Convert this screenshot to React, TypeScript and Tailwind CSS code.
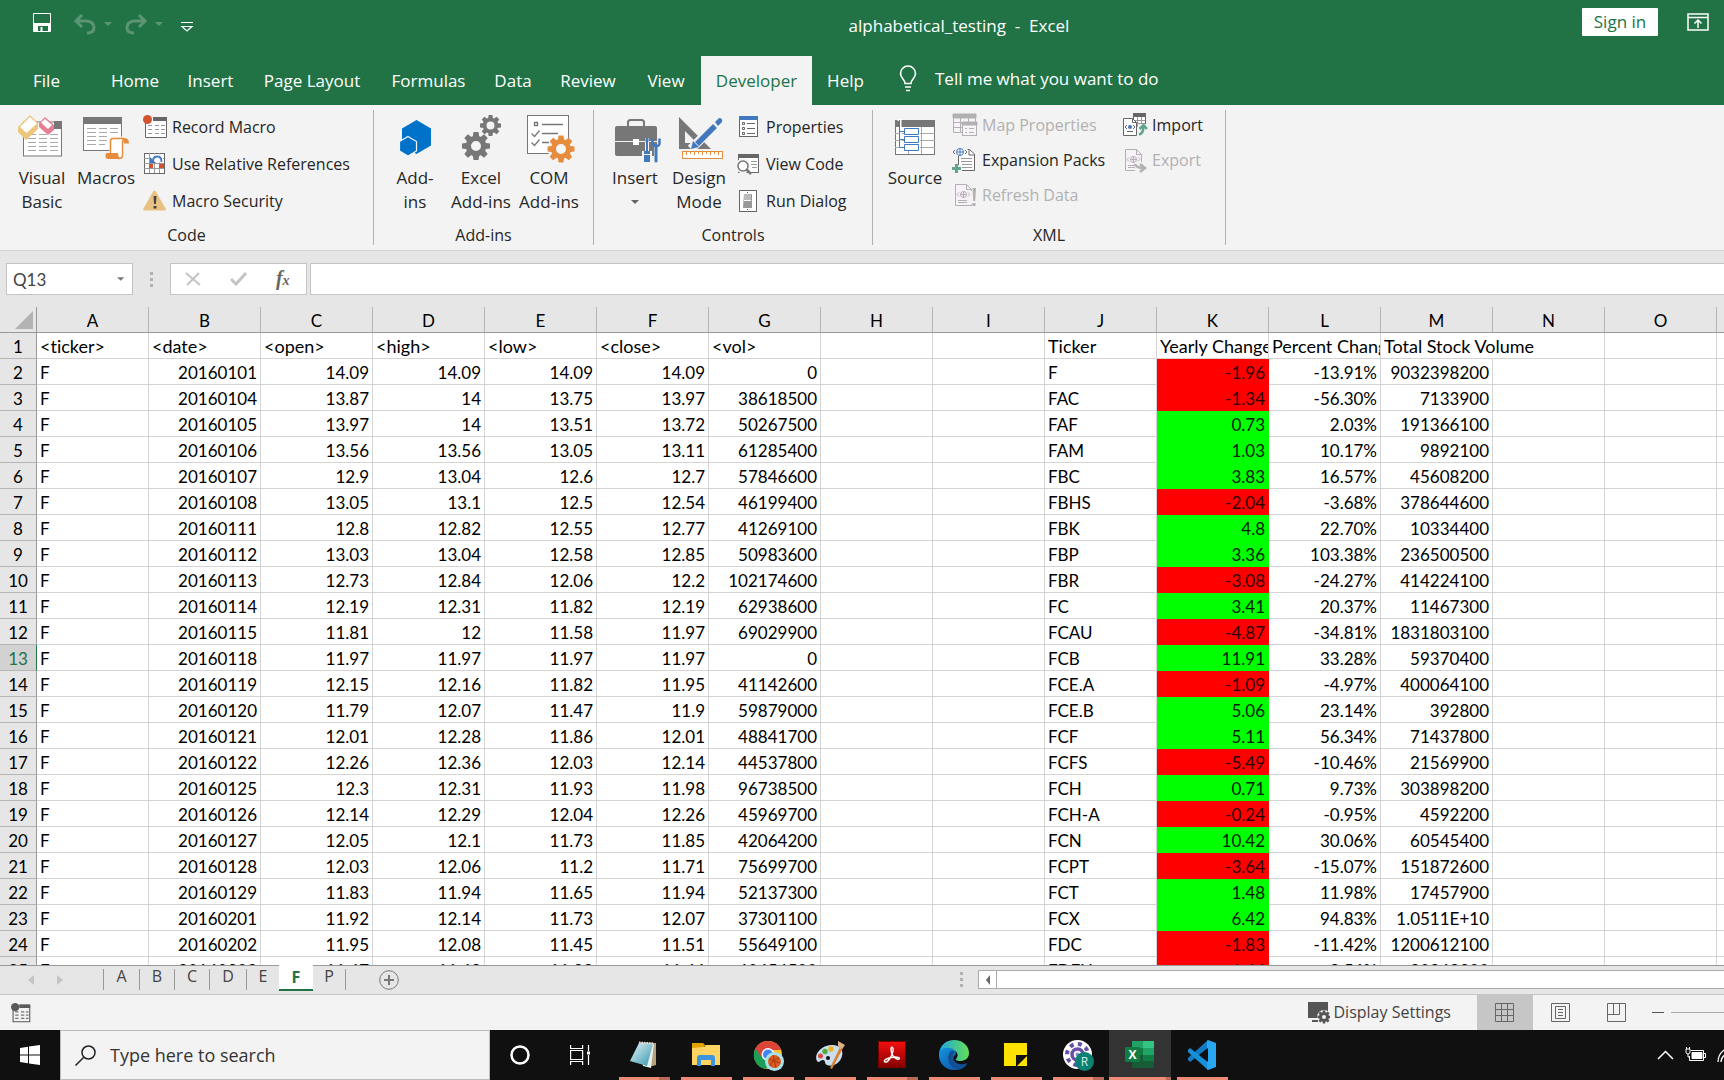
import React from "react";

function Gear({ cx, cy, r, hole, fill }: { cx: number; cy: number; r: number; hole: number; fill: string }) {
  const ring = r * 0.74;
  return (
    <g transform={`translate(${cx} ${cy})`} fill={fill}>
      {[0, 45, 90, 135, 180, 225, 270, 315].map((a) => (
        <path key={a} transform={`rotate(${a})`} d={`M${-r * 0.24} ${-ring * 0.8}L${-r * 0.18} ${-r}H${r * 0.18}L${r * 0.24} ${-ring * 0.8}Z`} />
      ))}
      <circle r={(ring + hole) / 2} fill="none" stroke={fill} strokeWidth={ring - hole} />
    </g>
  );
}

function Big({ children }: { children: React.ReactNode }) {
  return (
    <svg width="48" height="48" viewBox="0 0 48 48" className="shrink-0 overflow-visible" aria-hidden="true">
      {children}
    </svg>
  );
}

function Small({ children }: { children: React.ReactNode }) {
  return (
    <svg width="24" height="24" viewBox="0 0 24 24" className="shrink-0 overflow-visible" aria-hidden="true">
      {children}
    </svg>
  );
}

const VisualBasicIcon = () => (
  <Big>
    <rect x="5.5" y="9" width="38" height="34" fill="#fff" stroke="#777" />
    <path d="M36 8h8v8h-8z" fill="#777" />
    <path d="M10 21.500h8m3 0h8m3 0h8M10 25.500h8m3 0h8m3 0h8M10 29.500h8m3 0h8m3 0h8M10 33.500h8m3 0h8m3 0h8M10 37.500h8m3 0h8m3 0h8" stroke="#a9a9a9" />
    <path d="M0 14L12 2l8 8v6L8 27 0 19z" fill="#ecc77b" />
    <path d="M2 14L12 4l7 6.500L8.500 20z" fill="#fff" />
    <path d="M21 10l6-6 9 8v5l-6 5-9-8z" fill="#e57f96" />
    <path d="M23 9.500L27 6l7 6-4 4z" fill="#fff" />
  </Big>
);

const MacrosIcon = () => (
  <Big>
    <rect x="1.500" y="4.500" width="38" height="33" fill="#fff" stroke="#777" />
    <path d="M1 4h39v7H1z" fill="#777" />
    <path d="M5 15.500h9m3 0h8m3 0h8M5 19.500h9m3 0h8m3 0h8M5 23.500h9m3 0h8M5 27.500h9m3 0h8M5 31.500h9m3 0h6" stroke="#a9a9a9" />
    <path d="M29 40V28q0-3 3-3h11q4 0 4 5h-4v12q0 4-4 4H27z" fill="#fff" stroke="#f3f3f3" strokeWidth="3" />
    <path d="M28.500 41V28q0-2.500 3-2.500h11q-2 1-2 4V42q0 3.500-3.500 3.500-2 0-2-3.500z" fill="#fff" stroke="#e78c3c" strokeWidth="1.500" />
    <path d="M41 25.500q6-1 6 5h-5zM25 40h11q0 4 3 6H26q-2.500 0-2.500-3T25 40z" fill="#e78c3c" />
  </Big>
);

const AddinsIcon = () => (
  <Big>
    <path d="M25.500 7L40 15.500v17L25.500 41 11 32.500v-17z" fill="#0072c9" />
    <path d="M17 23.500l8.500 5v9.500L17 43l-8.500-5v-9.500z" fill="#0072c9" stroke="#f3f3f3" strokeWidth="1.200" />
  </Big>
);

const ExcelAddinsIcon = () => (
  <Big>
    <Gear cx={33.500} cy={12.500} r={10.500} hole={4} fill="#777" />
    <Gear cx={19} cy={33} r={14} hole={5} fill="#777" />
  </Big>
);

const ComIcon = () => (
  <Big>
    <rect x="2.500" y="2.500" width="41" height="38" fill="#fff" stroke="#777" />
    <path d="M9.500 9.500h3v3h-3zM17 11.500h21M17 20.500h16M17 29.500h7M6.500 20.500l3 3 5-6M6.500 29.500l3 3 5-6" fill="none" stroke="#777" strokeWidth="1.300" />
    <circle cx="36" cy="36" r="13" fill="#f6f6f6" />
    <Gear cx={36} cy={36} r={13.500} hole={5} fill="#e78c3c" />
  </Big>
);

const ToolboxIcon = () => (
  <Big>
    <path d="M17 13V9.500Q17 7 19.500 7h11Q33 7 33 9.500V13" fill="none" stroke="#777" strokeWidth="2" />
    <rect x="4" y="13" width="42" height="30" rx="2" fill="#777" />
    <path d="M4 28.500h42" stroke="#f3f3f3" />
    <rect x="22" y="26" width="6" height="6" fill="#fff" />
    <path d="M36 25v13M33 40h6v9h-6zM45 34v15" fill="none" stroke="#f3f3f3" strokeWidth="4" />
    <path d="M36 25v14" stroke="#4178be" strokeWidth="2" />
    <path d="M34.500 25h3v4h-3zM33 38h6v3h-6zM33 42h6v7h-6z" fill="#4178be" />
    <path d="M41.500 25.500v4q0 3 3.500 3.500t3.500-3.500v-4" fill="none" stroke="#4178be" strokeWidth="2.500" />
    <path d="M45 33v15" stroke="#4178be" strokeWidth="3" strokeLinecap="round" />
  </Big>
);

const DesignIcon = () => (
  <Big>
    <path d="M4 4l32 32H4zM10 18v12h12z" fill="#777" fillRule="evenodd" />
    <path d="M16 36L45 7" stroke="#f3f3f3" strokeWidth="9" />
    <path d="M22 31L40 13" stroke="#4178be" strokeWidth="5.500" />
    <path d="M16 36l2-8 6 6zM40 9l4-4q4 0 3 4l-4 4z" fill="#4178be" />
    <rect x="7.500" y="38.500" width="40" height="7" fill="#fff" stroke="#e78c3c" />
    <path d="M11.500 38v4m4-4v3m4-3v4m4-4v3m4-3v4m4-4v3m4-3v4m4-4v3m4-3v4" stroke="#e78c3c" />
  </Big>
);

const SourceIcon = () => (
  <Big>
    <rect x="4.500" y="7.500" width="39" height="34" fill="#fff" stroke="#777" />
    <path d="M4 7h40v7H4z" fill="#777" />
    <path d="M4 20.500h40M4 27.500h40M4 34.500h40M30.500 14v27M17.500 38v3" stroke="#a9a9a9" />
    <path d="M13 16h16v21H13z" fill="#fff" />
    <path d="M6.500 7h3v28" stroke="#fff" strokeWidth="2" fill="none" />
    <path d="M8.500 7v27.500H13M8.500 18.500H13M8.500 26.500H13M13.500 15.500h14v6h-14zM13.500 23.500h14v6h-14zM13.500 31.500h14v6h-14z" fill="none" stroke="#4178be" />
  </Big>
);

const RecordIcon = () => (
  <Small>
    <path d="M2.500 8v14.500h21V2.500H10" fill="#fff" stroke="#666" />
    <path d="M10 2h14v4H10z" fill="#666" />
    <path d="M5 10.500h4m3 0h4m2 0h4M5 14.500h4m3 0h4m2 0h4M5 18.500h4m3 0h4m2 0h4" stroke="#999" />
    <circle cx="4.500" cy="4.500" r="4.500" fill="#d35230" />
  </Small>
);

const RelativeIcon = () => (
  <Small>
    <rect x="1.500" y="1.500" width="20" height="20" fill="#fff" stroke="#666" />
    <path d="M6.500 1v20M11.500 1v20M16.500 1v20M1 6.500h20M1 11.500h20M1 16.500h20" stroke="#999" />
    <path d="M6 12h4v4H6zM16 12h5v4h-5z" fill="#d35230" />
    <path d="M7 2.500h13v8H7z" fill="#fff" />
    <path d="M10 9q0-4.500 4.500-4.500 4 0 4 5.500" fill="none" stroke="#4178be" strokeWidth="1.800" />
    <path d="M7 5v6h6z" fill="#4178be" />
  </Small>
);

const WarningIcon = () => (
  <Small>
    <path d="M11.500 1.500q1 0 2 2l9 16q1 2-1 2h-20q-2 0-1-2l9-16q1-2 2-2z" fill="#e9c282" />
    <path d="M10.500 7h3l-.6 8h-1.800zM10.500 17h3v2.500h-3z" fill="#444" />
  </Small>
);

const PropertiesIcon = () => (
  <Small>
    <rect x="2.500" y="1.500" width="18" height="20" fill="#fff" stroke="#666" />
    <path d="M2 1h19v4H2z" fill="#4178be" />
    <path d="M10 8.500h8M10 13.500h8M10 18.500h8" stroke="#666" />
    <path d="M5.500 7.500h2v2h-2zM5.500 12.500h2v2h-2zM5.500 17.500h2v2h-2z" fill="none" stroke="#666" />
  </Small>
);

const ViewCodeIcon = () => (
  <Small>
    <rect x="1.500" y="2.500" width="20" height="18" fill="#fff" stroke="#666" />
    <path d="M1 2h21v4H1z" fill="#666" />
    <path d="M14 9.500h6M14 12.500h6M15 15.500h5" stroke="#999" />
    <circle cx="6" cy="14" r="5.500" fill="#fff" stroke="#f3f3f3" strokeWidth="4" />
    <circle cx="6" cy="14" r="5" fill="#fff" stroke="#777" strokeWidth="1.500" />
    <path d="M9.500 17.500L14 22" stroke="#777" strokeWidth="2.500" />
  </Small>
);

const RunDialogIcon = () => (
  <Small>
    <rect x="2.500" y="1.500" width="17" height="21" fill="#fff" stroke="#666" />
    <path d="M7 5h8v14H6z" fill="#999" />
    <path d="M7 5h7v6H7z" fill="#bbb" />
    <path d="M7 11.500h7" stroke="#fff" />
    <path d="M10.500 3v1m0 16v1" stroke="#555" />
  </Small>
);

const MapIcon = () => (
  <Small>
    <path d="M.5 1.500h22v18H.5z" fill="#f7f3f8" stroke="#b1b1b1" />
    <path d="M0 1h23v4H0zM0 9.500h22M0 14.500h22M7.500 5v14M15.500 5v5" stroke="#b1b1b1" fill="#b1b1b1" />
    <rect x="9.500" y="9.500" width="14" height="13" fill="#f7f3f8" stroke="#b1b1b1" />
    <path d="M9 9h15v3H9zM12 15.500h2m2 0h5M12 19.500h2m2 0h5" stroke="#b1b1b1" fill="#b1b1b1" />
  </Small>
);

const ExpansionIcon = () => (
  <Small>
    <path d="M5.500 8v14.500h16V6l-5-4.500h-2" fill="#fff" stroke="#666" />
    <path d="M16 1.500V7h5.500" fill="none" stroke="#666" />
    <path d="M8 10.500h11M8 13.500h11M9 16.500h10M9 19.500h10" stroke="#999" />
    <circle cx="7" cy="4" r="3.500" fill="#fff" stroke="#4178be" />
    <path d="M7 .5v7M3.500 4h7" stroke="#4178be" />
    <path d="M2 2L0 4l2 2M12 2l2 2-2 2" fill="none" stroke="#666" />
    <path d="M0 17h9v7H0z" fill="#f3f3f3" />
    <path d="M3.500 16v9M-1 20.500h9" stroke="#5fa68a" strokeWidth="3" />
  </Small>
);

const DisabledDoc = ({ children }: { children: React.ReactNode }) => (
  <Small>
    <path d="M2.500 1.500h11l5 5v16h-16z" fill="#f9f1f9" stroke="#b1b1b1" />
    <path d="M13.500 1.500v5h5M5 17.500h9M5 19.500h9" fill="none" stroke="#b1b1b1" />
    <circle cx="10.500" cy="11.500" r="3" fill="none" stroke="#b1b1b1" />
    <path d="M10.500 8v7M7 11.500h7M6 9.500l-2 2 2 2M15 9.500l2 2-2 2" fill="none" stroke="#b1b1b1" />
    {children}
  </Small>
);

const RefreshIcon = () => (
  <DisabledDoc>
    <path d="M17.500 8h1.500v13h-1.500z" fill="#f3f3f3" />
    <path d="M19.500 5h3.500l-.8 13h-1.900zM19.500 20h3v3h-3z" fill="#b1b1b1" />
  </DisabledDoc>
);

const ExportIcon = () => (
  <DisabledDoc>
    <path d="M12 14h12v9H12z" fill="#f3f3f3" />
    <path d="M12 16q1 4 9 4M17 16l5 4-5 4" fill="none" stroke="#b1b1b1" strokeWidth="2.500" />
  </DisabledDoc>
);

const ImportIcon = () => (
  <Small>
    <rect x="10.500" y="1" width="12" height="12" fill="#fff" stroke="#666" />
    <path d="M10 0h13v4H10z" fill="#666" />
    <path d="M10 7.500h12M14.500 4v9M18.500 4v9M10 10.500h12" stroke="#999" />
    <path d="M.5 5.500h9l4 4v13H.5z" fill="#fff" stroke="#666" />
    <path d="M9.500 5.500v4h4M4 18.500h6" fill="none" stroke="#666" />
    <circle cx="7" cy="14" r="2" fill="#4178be" />
    <path d="M4 12l-2 2 2 2M10 12l2 2-2 2" fill="none" stroke="#666" />
    <path d="M15 11h9v12h-9z" fill="#f3f3f3" />
    <path d="M16 21.500q4.500-1 4.500-8M16.500 16l4-4 3.500 4" fill="none" stroke="#5fa68a" strokeWidth="2.500" />
  </Small>
);

function BigButton({ icon, lines, width, arrow }: { icon: React.ReactNode; lines: string[]; width: string; arrow?: boolean }) {
  return (
    <button className={`${width} flex shrink-0 flex-col items-center self-start whitespace-nowrap text-[17px] leading-6`}>
      {icon}
      <span className="mt-[5px] block">{lines[0]}</span>
      {lines[1] && <span className="block">{lines[1]}</span>}
      {arrow && (
        <svg width="8" height="4" viewBox="0 0 8 4" className="mt-2.5" aria-hidden="true">
          <path d="M0 0h8L4 4z" fill="#666" />
        </svg>
      )}
    </button>
  );
}

function SmallButton({ icon, label, disabled }: { icon: React.ReactNode; label: string; disabled?: boolean }) {
  return (
    <button disabled={disabled} className="flex items-center gap-[5px] whitespace-nowrap leading-6 disabled:text-[#b1b1b1]">
      {icon}
      {label}
    </button>
  );
}

function Group({ label, width, children }: { label: string; width: string; children: React.ReactNode }) {
  return (
    <section aria-label={label} className={`${width} flex shrink-0 flex-col border-r border-[#b1b1b1]`}>
      <div className="flex h-[115px] pl-2 pt-[3px]">{children}</div>
      <h2 className="text-center leading-5">{label}</h2>
    </section>
  );
}

const tabs: [string, string][] = [
  ["File", "w-[97px] pr-1"],
  ["Home", "w-[76px]"],
  ["Insert", "w-[75px]"],
  ["Page Layout", "w-[128px]"],
  ["Formulas", "w-[105px]"],
  ["Data", "w-[64px]"],
  ["Review", "w-[86px]"],
  ["View", "w-[70px]"],
  ["Developer", "w-[111px]"],
  ["Help", "w-[67px]"],
];

const prices = `20160101 14.09 14.09 14.09 14.09 0
20160104 13.87 14 13.75 13.97 38618500
20160105 13.97 14 13.51 13.72 50267500
20160106 13.56 13.56 13.05 13.11 61285400
20160107 12.9 13.04 12.6 12.7 57846600
20160108 13.05 13.1 12.5 12.54 46199400
20160111 12.8 12.82 12.55 12.77 41269100
20160112 13.03 13.04 12.58 12.85 50983600
20160113 12.73 12.84 12.06 12.2 102174600
20160114 12.19 12.31 11.82 12.19 62938600
20160115 11.81 12 11.58 11.97 69029900
20160118 11.97 11.97 11.97 11.97 0
20160119 12.15 12.16 11.82 11.95 41142600
20160120 11.79 12.07 11.47 11.9 59879000
20160121 12.01 12.28 11.86 12.01 48841700
20160122 12.26 12.36 12.03 12.14 44537800
20160125 12.3 12.31 11.93 11.98 96738500
20160126 12.14 12.29 12.04 12.26 45969700
20160127 12.05 12.1 11.73 11.85 42064200
20160128 12.03 12.06 11.2 11.71 75699700
20160129 11.83 11.94 11.65 11.94 52137300
20160201 11.92 12.14 11.73 12.07 37301100
20160202 11.95 12.08 11.45 11.51 55649100
20160203 11.67 11.68 11.22 11.46 60454500`.split("\n").map((l) => l.split(" "));

const summary = `F -1.96 -13.91% 9032398200
FAC -1.34 -56.30% 7133900
FAF 0.73 2.03% 191366100
FAM 1.03 10.17% 9892100
FBC 3.83 16.57% 45608200
FBHS -2.04 -3.68% 378644600
FBK 4.8 22.70% 10334400
FBP 3.36 103.38% 236500500
FBR -3.08 -24.27% 414224100
FC 3.41 20.37% 11467300
FCAU -4.87 -34.81% 1831803100
FCB 11.91 33.28% 59370400
FCE.A -1.09 -4.97% 400064100
FCE.B 5.06 23.14% 392800
FCF 5.11 56.34% 71437800
FCFS -5.49 -10.46% 21569900
FCH 0.71 9.73% 303898200
FCH-A -0.24 -0.95% 4592200
FCN 10.42 30.06% 60545400
FCPT -3.64 -15.07% 151872600
FCT 1.48 11.98% 17457900
FCX 6.42 94.83% 1.0511E+10
FDC -1.83 -11.42% 1200612100
FDEU -1.66 -9.56% 20362300`.split("\n").map((l) => l.split(" "));

const columns = "ABCDEFGHIJKLMNO".split("");
const headings = ["<ticker>", "<date>", "<open>", "<high>", "<low>", "<close>", "<vol>", "", "", "Ticker", "Yearly Change", "Percent Change", "Total Stock Volume", "", ""];

const cell = "h-[26px] whitespace-nowrap border-b border-[#d4d4d4] p-0 px-[3px] pt-0.5 leading-[23px]";

function RowHead({ n }: { n: number }) {
  const active = n === 13;
  return (
    <th
      scope="row"
      className={`h-[26px] border-b border-r border-b-[#b5b5b5] p-0 pt-0.5 text-center font-normal leading-[23px] ${active ? "border-r-[#217346] bg-[#d2d2d2] text-[#217346]" : "border-r-[#999] bg-[#e6e6e6]"}`}
    >
      {n}
    </th>
  );
}

function Sheet() {
  return (
    <table className="w-full table-fixed border-separate border-spacing-0 bg-white font-['Lato','Liberation_Sans',sans-serif] text-[17px] text-black [font-variant-ligatures:none]">
      <colgroup>
        <col className="w-[37px]" />
        {columns.map((c) => (
          <col key={c} className="w-[112px]" />
        ))}
        <col />
      </colgroup>
      <thead>
        <tr className="bg-[#e6e6e6]">
          <th className="h-[26px] border-b border-r border-[#999] p-0">
            <svg width="18" height="18" viewBox="0 0 18 18" className="ml-auto mr-[3px]" aria-label="Select all">
              <path d="M18 0v18H0z" fill="#b3b3b3" />
            </svg>
          </th>
          {columns.map((c) => (
            <th key={c} scope="col" className="h-[26px] border-b border-r border-b-[#999] border-r-[#b5b5b5] p-0 pt-0.5 font-normal leading-[23px]">
              {c}
            </th>
          ))}
          <th className="border-b border-[#999] p-0" />
        </tr>
      </thead>
      <tbody>
        <tr>
          <RowHead n={1} />
          {headings.map((h, i) => (
            <td key={i} className={`${cell} text-lg ${i === 12 ? "overflow-visible" : "overflow-hidden border-r"}`}>
              {h}
            </td>
          ))}
          <td className={cell} />
        </tr>
        {prices.map((p, i) => {
          const s = summary[i];
          return (
            <tr key={p[0]}>
              <RowHead n={i + 2} />
              <td className={`${cell} border-r`}>F</td>
              {p.map((v, j) => (
                <td key={j} className={`${cell} border-r text-right`}>
                  {v}
                </td>
              ))}
              <td className={`${cell} border-r`} />
              <td className={`${cell} border-r`} />
              <td className={`${cell} border-r`}>{s[0]}</td>
              <td className={`h-[26px] p-0 pb-px pr-1 pt-0.5 text-right leading-[23px] ${s[1].startsWith("-") ? "bg-[#ff0000] text-[#2a0000]" : "bg-[#00ff00] text-[#002000]"}`}>{s[1]}</td>
              <td className={`${cell} border-r text-right`}>{s[2]}</td>
              <td className={`${cell} border-r text-right`}>{s[3]}</td>
              <td className={`${cell} border-r`} />
              <td className={`${cell} border-r`} />
              <td className={cell} />
            </tr>
          );
        })}
      </tbody>
    </table>
  );
}

function Dots() {
  return (
    <span className="flex flex-col gap-[3px]" aria-hidden="true">
      <i className="size-[3px] bg-[#b1b1b1]" />
      <i className="size-[3px] bg-[#b1b1b1]" />
      <i className="size-[3px] bg-[#b1b1b1]" />
    </span>
  );
}

function AppIcon({ children }: { children: React.ReactNode }) {
  return (
    <svg width="32" height="32" viewBox="0 0 32 32" aria-hidden="true">
      {children}
    </svg>
  );
}

const apps: { name: string; stack?: boolean; active?: boolean; icon: React.ReactNode }[] = [
  {
    name: "Notepad",
    stack: true,
    icon: (
      <AppIcon>
        <defs>
          <linearGradient id="pad" x1="0" y1="0" x2="1" y2="1">
            <stop offset="0" stopColor="#e4f6fa" />
            <stop offset="1" stopColor="#3594ab" />
          </linearGradient>
        </defs>
        <path d="M12 3l16 1v22l-7 2z" fill="#b3a17e" />
        <path d="M11 4l15 1-3 24-8-2z" fill="#e6eeee" />
        <path d="M11 4l14 1-6 22-17-5z" fill="url(#pad)" />
        <path d="M11 3.500l15 1" stroke="#ddd" strokeWidth="2" strokeDasharray="1.500 1" />
      </AppIcon>
    ),
  },
  {
    name: "File Explorer",
    icon: (
      <AppIcon>
        <path d="M2 4h11l3 3h-2v4H2z" fill="#e2a200" />
        <path d="M2 9l12-1 2-2h14v20H2z" fill="#ffd462" />
        <path d="M7 27V19q0-3 3-3h12q3 0 3 3v8h-4v-6h-10v6z" fill="#3b94dc" />
      </AppIcon>
    ),
  },
  {
    name: "Google Chrome",
    icon: (
      <AppIcon>
        <circle cx="16" cy="16" r="14" fill="#fbc52f" />
        <path d="M16 16L4 8.500A14 14 0 0 0 14 30l6-10z" fill="#1b9e57" />
        <path d="M3.500 9.500A14 14 0 0 1 29 11H16l-6 8z" fill="#db4437" />
        <circle cx="16" cy="15.500" r="6.500" fill="#fff" />
        <circle cx="16" cy="15.500" r="5" fill="#4285f4" />
        <circle cx="22.500" cy="22.500" r="9.500" fill="#a9e1ea" />
        <circle cx="22.500" cy="22.500" r="6.500" fill="#dd5a1f" />
        <path d="M17 20l11 4M21 16l3 13M18 27q2-6 9-8" fill="none" stroke="#a33a10" />
      </AppIcon>
    ),
  },
  {
    name: "Paint",
    icon: (
      <AppIcon>
        <path d="M17 6c8-1 13 5 11 11-2 8-10 11-15 9-3-1-1-5-4-5s-4 4-6 1C0 16 6 7 17 6z" fill="#c9dff0" />
        <circle cx="6.500" cy="17" r="2.500" fill="#d84a3c" />
        <circle cx="11" cy="12.500" r="2.700" fill="#50ad43" />
        <circle cx="17" cy="10" r="2.700" fill="#f3b11c" />
        <circle cx="14" cy="19" r="2" fill="#101010" />
        <path d="M26 8l3 1-11 21-2-1z" fill="#d98130" />
        <path d="M24 2l7 4-2 3-3 1-2-3z" fill="#d9b285" />
      </AppIcon>
    ),
  },
  {
    name: "Adobe Acrobat",
    stack: true,
    icon: (
      <AppIcon>
        <defs>
          <linearGradient id="pdf" x1="0" y1="0" x2="0" y2="1">
            <stop offset="0" stopColor="#f40f0f" />
            <stop offset="1" stopColor="#850000" />
          </linearGradient>
        </defs>
        <rect x="2.500" y="2.500" width="27" height="26" fill="url(#pdf)" stroke="#7a0000" />
        <path d="M9 23c-3-2 5-5 10-5 6 0 5 3 2 2-4-1-6-6-6-10 0-3 3-2 2 2-1 5-5 12-8 11z" fill="none" stroke="#fff" strokeWidth="1.400" />
      </AppIcon>
    ),
  },
  {
    name: "Microsoft Edge",
    icon: (
      <AppIcon>
        <defs>
          <linearGradient id="wave" x1="0" y1="0" x2="1" y2="0">
            <stop offset="0" stopColor="#1fa3e6" />
            <stop offset="1" stopColor="#63df54" />
          </linearGradient>
          <linearGradient id="deep" x1="0" y1="0" x2="1" y2="1">
            <stop offset="0" stopColor="#1495df" />
            <stop offset="1" stopColor="#0c4a9e" />
          </linearGradient>
        </defs>
        <path d="M1 15C2 6 8 1 16 1c9 0 15 6 15 13 0 6-5 8-9 8-3 0-5-1-4-2 4-5 0-9-5-9-6 0-10 2-12 8z" fill="url(#wave)" />
        <path d="M1 16c0-5 5-8 10-7 4 0 7 3 7 6-4 2-4 10 4 11 3 1 5 0 7-1-3 5-8 6-13 6C7 31 1 24 1 16z" fill="url(#deep)" />
        <path d="M10 18c1-5 4-8 7-5-4 4-2 10 4 12 4 1 7-1 8-1-2 4-6 6-9 6-6 0-10-6-10-12z" fill="#124f96" />
      </AppIcon>
    ),
  },
  {
    name: "Sticky Notes",
    icon: (
      <AppIcon>
        <path d="M4 4h23v12H16v11H4z" fill="#ffe100" />
        <path d="M17 27l10-10v10z" fill="#ffe100" />
      </AppIcon>
    ),
  },
  {
    name: "Meeting",
    stack: true,
    icon: (
      <AppIcon>
        <circle cx="15.500" cy="15.500" r="14.500" fill="#fff" />
        <circle cx="15.500" cy="15.500" r="10.500" fill="none" stroke="#6750a8" strokeWidth="4" strokeDasharray="4 4.250" />
        <circle cx="15.500" cy="15.500" r="5.500" fill="none" stroke="#6750a8" strokeWidth="3.500" />
        <circle cx="15.500" cy="15.500" r="2" fill="#9a8bc8" />
        <circle cx="22.500" cy="22.500" r="9.500" fill="#0b8173" />
        <text x="22.500" y="27" textAnchor="middle" fontSize="12" fill="#d3ece8" fontFamily="Open Sans">R</text>
      </AppIcon>
    ),
  },
  {
    name: "Excel",
    stack: true,
    active: true,
    icon: (
      <AppIcon>
        <path d="M8 2h12v7H8z" fill="#21a366" />
        <path d="M19 2h11v7H19z" fill="#33c481" />
        <path d="M8 9h11v7H8z" fill="#107c41" />
        <path d="M19 9h11v7H19z" fill="#21a366" />
        <path d="M8 16h22v13H8z" fill="#185c37" />
        <path d="M19 16h11v6H19z" fill="#107c41" />
        <rect x="1" y="8" width="15" height="15" rx="1" fill="#107c41" />
        <text x="8.500" y="20" textAnchor="middle" fontSize="12" fontWeight="700" fill="#fff" fontFamily="Open Sans">X</text>
      </AppIcon>
    ),
  },
  {
    name: "Visual Studio Code",
    icon: (
      <AppIcon>
        <path d="M23 8L4 23l-2-2v-2L22 1z" fill="#0f7cc5" />
        <path d="M23 24L4 9 2 11v2l20 18z" fill="#1591dc" />
        <path d="M22 1l8 3v24l-8 3-1-1V2z" fill="#2aa7f2" />
        <path d="M22 9v14l-8-7z" fill="#101010" />
      </AppIcon>
    ),
  },
];

const sheetTabs: [string, string][] = [
  ["A", "w-[36px]"],
  ["B", "w-[35px]"],
  ["C", "w-[35px]"],
  ["D", "w-[37px]"],
  ["E", "w-[33px]"],
  ["F", "w-[34px]"],
  ["P", "w-[33px]"],
];

const Arrow = ({ d, fill = "#c4c4c4" }: { d: string; fill?: string }) => (
  <svg width="6" height="10" viewBox="0 0 6 10" aria-hidden="true">
    <path d={d} fill={fill} />
  </svg>
);

export default function App() {
  return (
    <div className="flex h-screen flex-col overflow-hidden bg-[#e6e6e6] font-['Open_Sans','Noto_Sans',sans-serif] text-base text-[#262626]">
      <header className="shrink-0 bg-[#217346] text-[17px] text-white">
        <div className="grid h-14 grid-cols-[1fr_auto_1fr]">
          <div className="flex items-start pl-8 pt-[12px]">
            <button aria-label="Save" className="mr-5">
              <svg width="21" height="21" viewBox="0 0 21 21">
                <path d="M1.500 1.500h17v18h-17z" fill="none" stroke="#fff" />
                <path d="M2 12h17v7h-3v-5H6v5H2zM2 12v-1h17v1zM8.500 15h2v4h-2z" fill="#fff" />
              </svg>
            </button>
            <button aria-label="Undo" className="flex items-center gap-[7px]">
              <svg width="24" height="24" viewBox="0 0 24 24" fill="none" stroke="#5b9576" strokeWidth="3">
                <path d="M2 9h12q7 1 7 6.500T14 21M9 3L3 9l6 6" />
              </svg>
              <svg width="8" height="4" viewBox="0 0 8 4"><path d="M0 0h8L4 4z" fill="#5b9576" /></svg>
            </button>
            <button aria-label="Redo" className="ml-3 flex items-center gap-[7px]">
              <svg width="24" height="24" viewBox="0 0 24 24" fill="none" stroke="#5b9576" strokeWidth="3">
                <path d="M22 9H10q-7 1-7 6.500T10 21M15 3l6 6-6 6" />
              </svg>
              <svg width="8" height="4" viewBox="0 0 8 4"><path d="M0 0h8L4 4z" fill="#5b9576" /></svg>
            </button>
            <button aria-label="Customize Quick Access Toolbar" className="ml-[17px] pt-2">
              <svg width="14" height="12" viewBox="0 0 14 12" fill="none" stroke="#fff">
                <path d="M1 2.500h12M2 6.500h10L7 11z" strokeWidth="1.200" />
              </svg>
            </button>
          </div>
          <h1 className="whitespace-pre pl-[194px] pt-[14px] leading-6">alphabetical_testing  -  Excel</h1>
          <div className="flex items-start justify-end gap-[29px] pr-[15px] pt-2">
            <button className="h-7 w-[76px] rounded-[1px] bg-white text-[#217346]">Sign in</button>
            <button aria-label="Ribbon Display Options" className="pt-[5px]">
              <svg width="22" height="18" viewBox="0 0 22 18" fill="none" stroke="#fff" strokeWidth="1.500">
                <path d="M1 1h20v16H1zM1 4.500h20M11 15V8M7.500 10.500L11 7l3.500 3.500" />
              </svg>
            </button>
          </div>
        </div>
        <nav className="flex h-[49px]" aria-label="Ribbon tabs">
          {tabs.map(([name, w]) => (
            <button key={name} className={`${w} shrink-0 whitespace-nowrap text-center ${name === "Developer" ? "bg-[#f3f3f3] text-[#217346]" : ""}`}>
              {name}
            </button>
          ))}
          <button className="ml-5 flex items-center gap-[18px] self-start pt-[9px]">
            <svg width="18" height="27" viewBox="0 0 18 27" fill="none" stroke="#fff" strokeWidth="1.600">
              <path d="M6 18.500c0-4-4.500-5-4.500-10a7.500 7.500 0 0 1 15 0c0 5-4.500 6-4.500 10zM6 22h6M7 25.500h4" />
            </svg>
            Tell me what you want to do
          </button>
        </nav>
      </header>

      <div className="flex h-[146px] shrink-0 border-b border-[#d2d2d2] bg-[#f3f3f3] pb-[5px] pt-[5px]">
        <Group label="Code" width="w-[374px]">
          <div className="ml-0.5 flex">
            <BigButton width="w-16" lines={["Visual", "Basic"]} icon={<VisualBasicIcon />} />
            <BigButton width="w-16" lines={["Macros"]} icon={<MacrosIcon />} />
          </div>
          <div className="ml-[5px] flex flex-col gap-[13px] pt-0.5">
            <SmallButton icon={<RecordIcon />} label="Record Macro" />
            <SmallButton icon={<RelativeIcon />} label="Use Relative References" />
            <SmallButton icon={<WarningIcon />} label="Macro Security" />
          </div>
        </Group>
        <Group label="Add-ins" width="w-[220px]">
          <BigButton width="w-[66px]" lines={["Add-", "ins"]} icon={<AddinsIcon />} />
          <BigButton width="w-[66px]" lines={["Excel", "Add-ins"]} icon={<ExcelAddinsIcon />} />
          <BigButton width="w-[70px]" lines={["COM", "Add-ins"]} icon={<ComIcon />} />
        </Group>
        <Group label="Controls" width="w-[279px]">
          <BigButton width="w-[66px]" lines={["Insert"]} icon={<ToolboxIcon />} arrow />
          <BigButton width="w-[62px]" lines={["Design", "Mode"]} icon={<DesignIcon />} />
          <div className="ml-[7px] flex flex-col gap-[13px] pt-0.5">
            <SmallButton icon={<PropertiesIcon />} label="Properties" />
            <SmallButton icon={<ViewCodeIcon />} label="View Code" />
            <SmallButton icon={<RunDialogIcon />} label="Run Dialog" />
          </div>
        </Group>
        <Group label="XML" width="w-[353px]">
          <BigButton width="w-[68px]" lines={["Source"]} icon={<SourceIcon />} />
          <div className="ml-1 flex flex-col gap-[11px]">
            <SmallButton icon={<MapIcon />} label="Map Properties" disabled />
            <SmallButton icon={<ExpansionIcon />} label="Expansion Packs" />
            <SmallButton icon={<RefreshIcon />} label="Refresh Data" disabled />
          </div>
          <div className="ml-auto mr-[22px] flex flex-col gap-[11px]">
            <SmallButton icon={<ImportIcon />} label="Import" />
            <SmallButton icon={<ExportIcon />} label="Export" disabled />
          </div>
        </Group>
      </div>

      <div className="flex h-14 shrink-0 items-start pl-1.5 pt-3">
        <div className="flex h-8 w-[127px] items-center border border-[#c4c4c4] bg-white pr-2">
          <input aria-label="Name box" defaultValue="Q13" className="w-full min-w-0 pl-1.5 pt-0.5 font-['Lato',sans-serif] text-[17px] text-[#444] outline-none" />
          <svg width="8" height="4" viewBox="0 0 8 4" aria-hidden="true"><path d="M0 0h8L4 4z" fill="#777" /></svg>
        </div>
        <div className="flex h-8 w-[37px] items-center justify-center"><Dots /></div>
        <div className="mr-[3px] flex h-8 w-[137px] items-center justify-around border border-[#c4c4c4] bg-white pr-0.5">
          <button aria-label="Cancel"><svg width="16" height="14" viewBox="0 0 16 14"><path d="M1 1l14 12M14 1L2 13" stroke="#c4c4c4" strokeWidth="2" /></svg></button>
          <button aria-label="Enter"><svg width="17" height="14" viewBox="0 0 17 14"><path d="M1 7l5 5L16 1" fill="none" stroke="#c4c4c4" strokeWidth="3" /></svg></button>
          <button aria-label="Insert function" className="font-['Liberation_Serif',serif] text-xl font-bold italic leading-5 text-[#666]">f<span className="text-sm">x</span></button>
        </div>
        <input aria-label="Formula bar" className="h-8 min-w-0 flex-1 border border-r-0 border-[#c4c4c4] bg-white px-2 outline-none" />
      </div>

      <main className="min-h-0 flex-1 overflow-hidden"><Sheet /></main>

      <div className="flex h-[30px] shrink-0 border-b border-t border-b-[#c6c6c6] border-t-[#999]">
        <div className="flex w-[103px] shrink-0 items-center gap-[23px] pl-7">
          <button aria-label="Previous sheet"><Arrow d="M6 0v10L0 5z" /></button>
          <button aria-label="Next sheet"><Arrow d="M0 0v10l6-5z" /></button>
        </div>
        <div className="flex items-start" role="tablist">
          {sheetTabs.map(([name, w]) =>
            name === "F" ? (
              <button key={name} role="tab" aria-selected="true" className={`${w} -mt-px h-[26px] border-b-2 border-[#217346] bg-white font-bold leading-[22px] text-[#217346]`}>
                {name}
              </button>
            ) : (
              <button key={name} role="tab" aria-selected="false" className={`${w} mt-[3px] h-[21px] border-[#999] pb-1.5 leading-[15px] text-[#444] ${name === "P" ? "border-r" : "border-l"}`}>
                {name}
              </button>
            ),
          )}
        </div>
        <button aria-label="New sheet" className="ml-[33px] self-center">
          <svg width="20" height="20" viewBox="0 0 20 20" fill="none" stroke="#777">
            <circle cx="10" cy="10" r="9.300" />
            <path d="M10 5v10M5 10h10" strokeWidth="2" />
          </svg>
        </button>
        <div className="ml-auto flex w-[45%] max-w-[764px] items-center pb-px">
          <Dots />
          <div className="ml-[15px] flex h-[19px] flex-1 border border-r-0 border-[#ababab] bg-white">
            <button aria-label="Scroll left" className="flex w-[18px] items-center justify-center border-r border-[#ababab]"><Arrow d="M5 0v10L1 5z" fill="#666" /></button>
          </div>
        </div>
      </div>

      <div className="flex h-[35px] shrink-0 items-center bg-[#f3f3f3]">
        <button aria-label="Record macro" className="ml-[11px]">
          <svg width="20" height="20" viewBox="0 0 24 24">
            <path d="M2.500 8v14.500h20V2.500H10" fill="none" stroke="#5a5a5a" strokeWidth="1.300" />
            <path d="M10 2h13v4H10z" fill="#5a5a5a" />
            <path d="M5 10.500h4m3 0h4m2 0h3M5 14.500h4m3 0h4m2 0h3M5 18.500h4m3 0h4m2 0h3" stroke="#777" strokeWidth="1.500" />
            <circle cx="5" cy="5" r="5" fill="#5a5a5a" />
          </svg>
        </button>
        <button className="ml-auto mr-[26px] flex items-center gap-1 whitespace-nowrap pb-0.5 text-[#444]">
          <svg width="23" height="24" viewBox="0 0 23 24">
            <path d="M1 2h20v16H1zM5 20h6v2H5z" fill="#555" />
            <circle cx="17" cy="17" r="7" fill="#f3f3f3" />
            <Gear cx={17} cy={17} r={6.500} hole={2} fill="#555" />
          </svg>
          Display Settings
        </button>
        <button aria-label="Normal view" className="flex h-full w-14 items-center justify-center bg-[#c6c6c6]">
          <svg width="20" height="20" viewBox="0 0 20 20" fill="none" stroke="#666"><path d="M.5.5h18v18H.5zM6.500 0v19M12.500 0v19M0 6.500h19M0 12.500h19" /></svg>
        </button>
        <button aria-label="Page layout view" className="flex h-full w-14 items-center justify-center">
          <svg width="20" height="20" viewBox="0 0 20 20" fill="none" stroke="#666"><path d="M.5.5h18v18H.5zM4.500 3.500h10v12h-10zM7 6.500h5M7 9.500h5M7 12.500h5" /></svg>
        </button>
        <button aria-label="Page break preview" className="flex h-full w-14 items-center justify-center">
          <svg width="20" height="20" viewBox="0 0 20 20" fill="none" stroke="#666"><path d="M.5.5h18v18H.5zM.5 11.500h12V.5M6.500 0v11" /></svg>
        </button>
        <button aria-label="Zoom out" className="ml-[7px] flex h-5 w-3 items-center"><span className="block h-px w-full bg-[#555]" /></button>
        <span className="ml-[7px] h-px w-[53px] bg-[#ababab]" />
      </div>

      <footer className="flex h-[50px] shrink-0 bg-[#101010] text-white">
        <button aria-label="Start" className="flex w-[60px] shrink-0 items-center justify-center">
          <svg width="20" height="20" viewBox="0 0 20 20" fill="#fff"><path d="M0 3l8-1.200v7.700H0zM9 1.600L20 0v9.500H9zM0 10.500h8v7.700L0 17zM9 10.500h11V20L9 18.400z" /></svg>
        </button>
        <label className="flex w-[430px] shrink-0 items-center gap-[14px] border border-[#bbb] bg-[#f3f3f3] pl-3.5">
          <svg width="21" height="21" viewBox="0 0 21 21" fill="none" stroke="#222" strokeWidth="1.500" aria-hidden="true"><circle cx="13.500" cy="7.500" r="6.500" /><path d="M9 12l-8.500 8.500" /></svg>
          <input aria-label="Search" placeholder="Type here to search" className="min-w-0 flex-1 bg-transparent text-lg outline-none placeholder:text-[#333]" />
        </label>
        <button aria-label="Cortana" className="flex w-[60px] items-center justify-center">
          <svg width="20" height="20" viewBox="0 0 20 20"><circle cx="10" cy="10" r="8.500" fill="none" stroke="#fff" strokeWidth="2.500" /></svg>
        </button>
        <button aria-label="Task view" className="flex w-[60px] items-center justify-center">
          <svg width="20" height="20" viewBox="0 0 20 20" fill="none" stroke="#fff" strokeWidth="1.200"><path d="M.6 0v3.500h12V0M.6 5.500h12v9H.6zM.6 20v-3.500h12V20M18.500 0v6M18.500 10v10" /><path d="M17 6.500h3v3h-3z" fill="#fff" stroke="none" /></svg>
        </button>
        <div className="ml-[3px] flex">
          {apps.map((a) => (
            <button key={a.name} aria-label={a.name} className={`flex w-[62px] flex-col items-center ${a.active ? "bg-[#333]" : ""}`}>
              <span className="flex flex-1 items-center pt-0.5">{a.icon}</span>
              <span className={`flex h-[3px] bg-[#ee8a76] ${a.active ? "w-full" : "w-[51px]"}`}>
                {a.stack && <span className={`ml-auto bg-[#b96a5b] ${a.active ? "w-[5px]" : "w-[11px]"}`} />}
              </span>
            </button>
          ))}
        </div>
        <div className="ml-auto flex items-center gap-[11px] overflow-hidden">
          <button aria-label="Show hidden icons"><svg width="17" height="10" viewBox="0 0 17 10"><path d="M1 9l7.500-7.500L16 9" fill="none" stroke="#fff" strokeWidth="1.500" /></svg></button>
          <svg width="21" height="16" viewBox="0 0 21 16" fill="none" stroke="#fff" aria-label="Battery"><path d="M6 3.500h12.500v10h-14V9M19 6.500h1.500v4H19M1 2v3q0 2 2 2t2-2V2zM1.500 0v2M4.500 0v2M3 7v3h2" /><path d="M7 5.500h10v6H7z" fill="#fff" /></svg>
          <svg width="7" height="16" viewBox="0 0 7 16" fill="none" stroke="#fff" aria-label="Wi-Fi"><path d="M1 15Q1 6 10 1M4 15q0-5 6-9" strokeWidth="1.300" /></svg>
        </div>
      </footer>
    </div>
  );
}
